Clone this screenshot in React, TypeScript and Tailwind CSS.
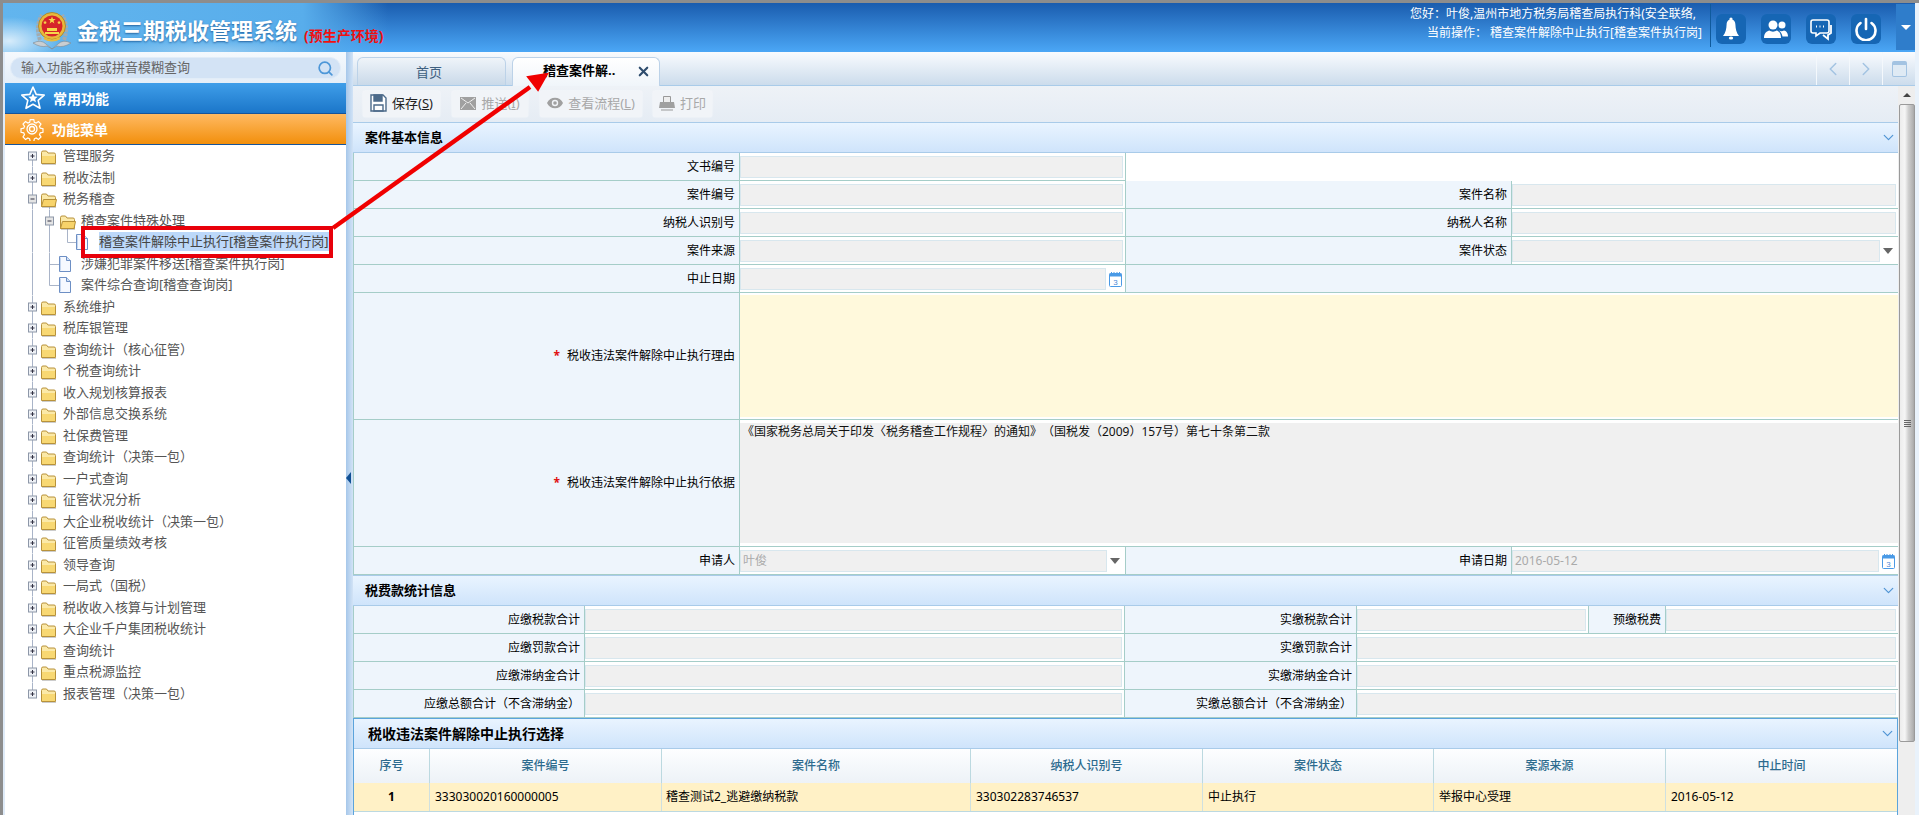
import React from "react";
import { ChevronDown, ChevronLeft, ChevronRight, X, Search } from "lucide-react";

const FOLDERS_A = ["管理服务", "税收法制"];
const FOLDERS_B = [
  "系统维护", "税库银管理", "查询统计（核心征管）", "个税查询统计", "收入规划核算报表", "外部信息交换系统",
  "社保费管理", "查询统计（决策一包）", "一户式查询", "征管状况分析", "大企业税收统计（决策一包）", "征管质量绩效考核",
  "领导查询", "一局式（国税）", "税收收入核算与计划管理", "大企业千户集团税收统计", "查询统计", "重点税源监控", "报表管理（决策一包）",
];

const LINE = "#a9b4c8";
const H = 21.5;

function Box({ x, open }: { x: number; open?: boolean }) {
  return (
    <g>
      <rect x={x - 3.5} y={7} width={8} height={8} fill={open ? "#e4e4e4" : "#eef1f6"} stroke="#8d97a8" />
      <path d={`M${x - 1.5} 11H${x + 2.5}`} stroke="#334" />
      {!open && <path d={`M${x + 0.5} 9V13`} stroke="#334" />}
    </g>
  );
}

function Folder({ x, open }: { x: number; open?: boolean }) {
  return (
    <g transform={`translate(${x} 4)`}>
      <path d="M0.5 3.5 Q0.5 2 2 2H5.5L7 4H13Q14.5 4 14.5 5.5V14.5H0.5Z" fill="#fbe9a8" stroke="#b8923a" />
      {open ? (
        <path d="M0.5 14.5 L2.5 7.5H15.5L14 14.5Z" fill="#f7d36a" stroke="#b8923a" />
      ) : (
        <path d="M1 7H14V14H1Z" fill="#f8d873" />
      )}
      <path d="M1 15.5H15" stroke="#9a9a9a" opacity="0.5" />
    </g>
  );
}

function Doc({ x }: { x: number }) {
  return (
    <g transform={`translate(${x} 3)`}>
      <path d="M0.5 0.5H7.5L11.5 4.5V15.5H0.5Z" fill="#f6f9ff" stroke="#6d8fc4" />
      <path d="M7.5 0.5V4.5H11.5" fill="#cfe0f6" stroke="#6d8fc4" />
      <path d="M1.5 1.5V14.5" stroke="#c5d6ef" />
    </g>
  );
}

type RowKind = {
  w: number;
  text: string;
  first?: boolean;
  last?: boolean;
  selected?: boolean;
  children?: React.ReactNode;
};

function TreeRow({ w, text, first, last, selected, children }: RowKind) {
  return (
    <div className="flex h-[21.5px] items-center">
      <svg width={w} height={H} viewBox={`0 0 ${w} ${H}`} className="shrink-0">
        <path d={first ? `M27.5 11V${H}` : last ? "M27.5 0V11" : `M27.5 0V${H}`} stroke={LINE} fill="none" />
        {children}
      </svg>
      <span className={selected ? "bg-[#bcd8fa] text-[#444] text-[13px] leading-[19px] whitespace-nowrap" : "text-[#555] text-[13px] leading-[19px] whitespace-nowrap"}>
        {text}
      </span>
    </div>
  );
}

function Tree() {
  return (
    <div>
      {FOLDERS_A.map((t, i) => (
        <TreeRow key={t} w={58} text={t} first={i === 0}>
          <Box x={27} />
          <Folder x={36} />
        </TreeRow>
      ))}
      <TreeRow w={58} text="税务稽查">
        <path d={`M44.5 15V${H}`} stroke={LINE} />
        <Box x={27} open />
        <Folder x={36} open />
      </TreeRow>
      <TreeRow w={76} text="稽查案件特殊处理">
        <path d={`M44.5 0V${H}M62.5 15V${H}`} stroke={LINE} />
        <Box x={44} open />
        <Folder x={55} open />
      </TreeRow>
      <TreeRow w={94} text="稽查案件解除中止执行[稽查案件执行岗]" selected>
        <path d={`M44.5 0V${H}M62.5 0V11.5H71`} stroke={LINE} fill="none" />
        <Doc x={71} />
      </TreeRow>
      <TreeRow w={76} text="涉嫌犯罪案件移送[稽查案件执行岗]">
        <path d={`M44.5 0V${H}M44.5 11.5H54`} stroke={LINE} fill="none" />
        <Doc x={54} />
      </TreeRow>
      <TreeRow w={76} text="案件综合查询[稽查查询岗]">
        <path d="M44.5 0V11.5H54" stroke={LINE} fill="none" />
        <Doc x={54} />
      </TreeRow>
      {FOLDERS_B.map((t, i) => (
        <TreeRow key={t + i} w={58} text={t} last={i === FOLDERS_B.length - 1}>
          <Box x={27} />
          <Folder x={36} />
        </TreeRow>
      ))}
    </div>
  );
}

function Emblem() {
  return (
    <svg width="38" height="40" viewBox="0 0 38 40" className="shrink-0">
      <path d="M0 33 Q8 29 13 34 L19 39 L25 34 Q30 29 38 33 Q30 38 24 36 L19 39 L14 36 Q8 38 0 33Z" fill="#c9ced2" stroke="#7f8a90" strokeWidth="0.6" />
      <path d="M7 30 Q2 16 9 5 M31 30 Q36 16 29 5" stroke="#a2abb0" strokeWidth="4" fill="none" strokeDasharray="3 1" />
      <circle cx="19" cy="16" r="13.500" fill="#e8b93c" stroke="#a97f1e" strokeWidth="0.8" />
      <circle cx="19" cy="16" r="10.500" fill="#d6242a" />
      <path d="M19 6.500l1 2.600h2.700l-2.200 1.600.9 2.700-2.400-1.700-2.400 1.700.9-2.700-2.200-1.600H18z" fill="#f7d84a" />
      <path d="M12 10.500l.6 1.300 1.400.1-1.100.9.4 1.300-1.300-.7-1.200.7.4-1.300-1.100-.9 1.400-.1zM26 10.500l.6 1.300 1.400.1-1.100.9.4 1.300-1.300-.7-1.200.7.4-1.300-1.100-.9 1.400-.1z" fill="#f7d84a" />
      <path d="M12 22h14v2H12zM14 18h10v3H14z" fill="#f7d84a" />
      <path d="M11 28 Q19 33 27 28" stroke="#e8b93c" strokeWidth="2.200" fill="none" />
    </svg>
  );
}

function HeadBtn({ children }: { children: React.ReactNode }) {
  return <div className="w-[30px] h-[30px] rounded-[6px] bg-[#1666b4] flex items-center justify-center">{children}</div>;
}

function Header() {
  return (
    <header className="h-[49px] w-[1912px] shrink-0 flex items-stretch bg-[radial-gradient(ellipse_50px_24px_at_6px_38px,rgba(255,255,255,0.75),transparent),radial-gradient(ellipse_120px_12px_at_210px_48px,rgba(255,255,255,0.35),transparent),linear-gradient(to_right,#62b5ee_0px,#58adeb_300px,rgba(80,160,230,0)_385px),linear-gradient(to_bottom,#1a5cae,#4ba7f6)]">
      <div className="ml-[30px] mt-[7px]"><Emblem /></div>
      <div className="ml-[6px] mt-[9px] text-[22px] leading-[36px] font-bold text-white [text-shadow:0_1px_2px_rgba(0,50,110,0.6)] whitespace-nowrap">金税三期税收管理系统</div>
      <div className="ml-[7px] mt-[24px] text-[14px] leading-[18px] font-bold text-[#f01010] whitespace-nowrap">(预生产环境)</div>
      <div className="ml-auto flex flex-col items-end pt-[1px] text-white text-[12px] leading-[19px] whitespace-nowrap">
        <div className="pr-[6px]">您好：叶俊,温州市地方税务局稽查局执行科(安全联络,</div>
        <div>当前操作： 稽查案件解除中止执行[稽查案件执行岗]</div>
      </div>
      <div className="ml-[8px] mt-[1px] h-[43px] w-px bg-[#0f5a9c]" />
      <div className="ml-[5px] mt-[11px] flex gap-[15px]">
        <HeadBtn>
          <svg width="18" height="24" viewBox="0 0 18 24" fill="#fff">
            <circle cx="9" cy="2" r="1.600" />
            <path d="M9 2.500c-3 0-4.300 2.200-4.400 5C4.400 12 3.600 16 1 19h16c-2.600-3-3.400-7-3.600-11.500-.1-2.800-1.400-5-4.400-5z" />
            <ellipse cx="9" cy="21" rx="2.200" ry="1.500" />
          </svg>
        </HeadBtn>
        <HeadBtn>
          <svg width="24" height="20" viewBox="0 0 24 20" fill="#fff">
            <circle cx="9" cy="6" r="4.500" />
            <path d="M0 19c0-5 3-7 5.500-7.500C7 13 11 13 12.500 11.500 15 12 17 14.500 17 19z" />
            <circle cx="18" cy="6" r="3.500" />
            <path d="M15 11.500c1.500 1 3.500 1 5 0 2 .5 4 2 4 6h-5.500c-.5-2.500-1.500-4.500-3.500-6z" />
          </svg>
        </HeadBtn>
        <HeadBtn>
          <svg width="24" height="24" viewBox="0 0 24 24" fill="none" stroke="#fff" strokeWidth="1.600">
            <path d="M4 3h14a2 2 0 0 1 2 2v9a2 2 0 0 1-2 2h-7l-4 3v-3H4a2 2 0 0 1-2-2V5a2 2 0 0 1 2-2z" />
            <path d="M22 8v8l-3 2v4l-5-4" strokeWidth="1.800" />
            <path d="M7 9.500h1M10.500 9.500h1M14 9.500h1" strokeWidth="2" />
          </svg>
        </HeadBtn>
        <HeadBtn>
          <svg width="24" height="24" viewBox="0 0 24 24" fill="none" stroke="#fff" strokeWidth="2.600" strokeLinecap="round">
            <path d="M12 2v10" />
            <path d="M6.500 6a9.500 9.500 0 1 0 11 0" />
          </svg>
        </HeadBtn>
      </div>
      <div className="ml-[15px] mt-[1px] h-[46px] w-[19px] bg-[#2f7dcb] flex items-center justify-center">
        <div className="w-0 h-0 border-x-[5px] border-x-transparent border-t-[5px] border-t-white" />
      </div>
    </header>
  );
}

function Sidebar() {
  return (
    <aside className="w-[343px] shrink-0 pl-[2px] bg-[#dfebf8]">
      <div className="h-full bg-white flex flex-col">
        <div className="h-[31px] shrink-0 bg-[linear-gradient(to_bottom,#f5f9fd,#e4eef8)] pl-[5px] pr-[5px] pt-[5px]">
          <div className="h-[22px] rounded-[11px] bg-[#d3e3f5] border border-[#e2edf8] flex items-center pl-[10px] pr-[6px] text-[13px] text-[#666] whitespace-nowrap">
            <span>输入功能名称或拼音模糊查询</span>
            <Search size={17} strokeWidth={2.400} className="ml-auto text-[#4d97d8]" />
          </div>
        </div>
        <div className="h-[31px] shrink-0 flex items-center bg-[linear-gradient(to_bottom,#3f9ee9,#1b76c9)] border-b border-[#16549a]">
          <svg width="26" height="26" viewBox="0 0 26 26" className="ml-[15px]">
            <path d="M13 2l3.200 7.400 8 .7-6 5.300 1.800 7.900L13 19.200 6 23.300l1.800-7.900-6-5.300 8-.7z" fill="none" stroke="#fff" strokeWidth="1.600" strokeLinejoin="round" />
            <path d="M13 8.500l1.400 3 3.300.3-2.500 2.200.8 3.200-3-1.700-3 1.700.8-3.200-2.500-2.200 3.300-.3z" fill="#fff" />
          </svg>
          <span className="ml-[7px] text-white font-bold text-[14px]">常用功能</span>
        </div>
        <div className="h-[31px] shrink-0 flex items-center bg-[linear-gradient(to_bottom,#ffba62,#f28f0c)] border-b border-[#16549a]">
          <svg width="24" height="24" viewBox="0 0 24 24" className="ml-[15px]" fill="none" stroke="#fff" strokeWidth="1.300">
            <path d="M10 1.500h4l.6 3 2 .9 2.600-1.700 2.800 2.800-1.700 2.600.9 2 3 .6v4l-3 .6-.9 2 1.700 2.600-2.800 2.800-2.600-1.700-2 .9-.6 3h-4l-.6-3-2-.9-2.600 1.700-2.800-2.800 1.700-2.600-.9-2-3-.6v-4l3-.6.9-2-1.700-2.600 2.800-2.800 2.600 1.700 2-.9z" transform="translate(1.200 1.200) scale(0.9)" />
            <circle cx="12" cy="12" r="5" />
            <circle cx="12" cy="12" r="2.500" />
          </svg>
          <span className="ml-[8px] text-white font-bold text-[14px]">功能菜单</span>
        </div>
        <Tree />
      </div>
    </aside>
  );
}

function Splitter() {
  return (
    <div className="w-[7px] shrink-0 bg-[linear-gradient(to_right,#a6c7ea,#d2e3f6)] flex items-center pb-[20px]">
      <div className="mt-[108px] w-0 h-0 border-y-[6px] border-y-transparent border-r-[5px] border-r-[#0f4f94]" />
    </div>
  );
}

function TabBar() {
  return (
    <div className="h-[34px] shrink-0 flex items-end pl-[4px] border-b border-[#a9cbe9] bg-[linear-gradient(to_bottom,#f9fbfe,#ccdcec)]">
      <div className="w-[149px] h-[28px] pr-[5px] pt-[2px] rounded-t-[6px] border border-b-0 border-[#bcd2e8] bg-[linear-gradient(to_bottom,#eff4f9,#c9d9e9)] flex items-center justify-center text-[13px] text-[#3d5f80]">首页</div>
      <div className="relative ml-[6px] w-[148px] h-[29px] -mb-px rounded-t-[6px] border border-b-0 border-[#bcd2e8] bg-[linear-gradient(to_bottom,#ffffff,#f0f5fa)] flex items-center pl-[30px] pb-[2px] text-[13px] font-bold text-black whitespace-nowrap">
        稽查案件解..
        <X size={15} strokeWidth={3.400} className="ml-[21px] text-[#2f4d6e]" />
      </div>
      <div className="ml-auto flex h-[33px] text-[#a3c3e2]">
        <div className="w-[33px] border-l border-[#f4f8fc] flex items-center justify-center"><ChevronLeft size={22} strokeWidth={1.600} /></div>
        <div className="w-[33px] border-l border-[#f4f8fc] flex items-center justify-center"><ChevronRight size={22} strokeWidth={1.600} /></div>
        <div className="w-[33px] border-l border-[#f4f8fc] flex items-center justify-center">
          <div className="w-[15px] h-[16px] rounded-[2px] border border-[#a3c3e2] border-t-[4px] bg-[#dfeaf4]" />
        </div>
      </div>
    </div>
  );
}

function ToolBtn({ className, disabled, children }: { className: string; disabled?: boolean; children: React.ReactNode }) {
  return (
    <div className={`h-[26px] flex items-center justify-center gap-[5px] rounded-[2px] bg-[#f1f4f8] shadow-[0_0_2px_rgba(255,255,255,0.9)] text-[13px] leading-[20px] pb-[2px] whitespace-nowrap ${disabled ? "text-[#a8a8a8]" : "text-[#222]"} ${className}`}>
      {children}
    </div>
  );
}

function Toolbar() {
  return (
    <div className="h-[36px] shrink-0 flex items-center bg-[linear-gradient(to_bottom,#eef2f7,#e5ecf4)] pl-[10px]">
      <ToolBtn className="w-[77px]">
        <svg width="17" height="18" viewBox="0 0 17 18" fill="none" stroke="#4d6b8a" strokeWidth="1.400">
          <path d="M1 1h12l3 3v13H1z" fill="#fff" />
          <path d="M4 1h8v6H4z" fill="#4d6b8a" />
          <path d="M4 11h9v6H4z" />
        </svg>
        <span>保存(<span className="underline">S</span>)</span>
      </ToolBtn>
      <ToolBtn className="ml-[12px] w-[76px]" disabled>
        <svg width="16" height="13" viewBox="0 0 16 13"><rect width="16" height="13" fill="#a0a0a0" /><path d="M1 1l7 5 7-5M1 12l5-6M15 12l-5-6" stroke="#eee" fill="none" /></svg>
        <span>推送(<span className="underline">I</span>)</span>
      </ToolBtn>
      <ToolBtn className="ml-[12px] w-[102px]" disabled>
        <svg width="16" height="12" viewBox="0 0 16 12"><path d="M0 6c3-7 13-7 16 0-3 7-13 7-16 0z" fill="#a0a0a0" /><circle cx="8" cy="6" r="3.200" fill="#f1f4f8" /><circle cx="8" cy="6" r="1.800" fill="#a0a0a0" /></svg>
        <span>查看流程(<span className="underline">L</span>)</span>
      </ToolBtn>
      <ToolBtn className="ml-[11px] w-[59px]" disabled>
        <svg width="16" height="16" viewBox="0 0 16 16"><path d="M4.500 7V1.500h7V7" fill="#eee" stroke="#999" /><path d="M1 7h14l1 6H0z" fill="#a0a0a0" /><path d="M2 15h12" stroke="#999" /></svg>
        <span>打印</span>
      </ToolBtn>
    </div>
  );
}

function SectionHead({ title, className }: { title: string; className?: string }) {
  return (
    <div className={`h-[31px] shrink-0 flex items-center justify-between border-y border-[#a9cbe9] bg-[linear-gradient(to_bottom,#e9f4ff,#cfe4fb)] text-black font-bold ${className ?? ""}`}>
      <span>{title}</span>
      <ChevronDown size={17} strokeWidth={1.700} className="text-[#4f94d4] mr-[1px]" />
    </div>
  );
}

function Row({ children }: { children: React.ReactNode }) {
  return <div className="h-[28px] shrink-0 flex border-b border-[#a5cdc8] bg-[#eef5fc]">{children}</div>;
}

function Label({ className, star, children }: { className: string; star?: boolean; children: React.ReactNode }) {
  return (
    <div className={`h-full flex items-center justify-end pr-[4px] border-r border-[#a5cdc8] text-[12px] text-black whitespace-nowrap bg-[#eef5fc] ${className}`}>
      {star && <span className="text-[#e01010] font-bold mr-[7px]">*</span>}
      {children}
    </div>
  );
}

function Calendar() {
  return (
    <svg width="13" height="15" viewBox="0 0 13 15" className="shrink-0">
      <rect x="0.500" y="1.500" width="12" height="13" rx="1" fill="#fff" stroke="#4a9ae6" />
      <rect x="0.500" y="1.500" width="12" height="3" fill="#4a9ae6" />
      <path d="M2.500 0v2M5 0v2M8 0v2M10.500 0v2" stroke="#4a9ae6" />
      <text x="6.500" y="12.500" textAnchor="middle" fontSize="8" fill="#4a8ad6" fontFamily="Liberation Sans">3</text>
    </svg>
  );
}

function Field({ className, kind, value }: { className: string; kind?: "date" | "select"; value?: string }) {
  return (
    <div className={`h-full flex items-center pt-[1px] pr-[2px] border-r border-[#a5cdc8] bg-white ${kind === "select" ? "bg-[#f0f0f0]" : ""} ${className}`}>
      <div className="flex-1 min-w-0 h-[22px] flex items-center pl-[2px] border border-[#d8e7ee] bg-[#f0f0f0] text-[12px] text-[#aaa]">{value}</div>
      {kind === "date" && <div className="w-[17px] flex justify-center pl-[1px]"><Calendar /></div>}
      {kind === "select" && (
        <div className="w-[16px] flex justify-center">
          <div className="w-0 h-0 border-x-[5px] border-x-transparent border-t-[6px] border-t-[#666]" />
        </div>
      )}
    </div>
  );
}

function BasicInfo() {
  return (
    <>
      <SectionHead title="案件基本信息" className="pl-[12px] text-[13px]" />
      <div className="border-l border-[#a5cdc8]">
        <div className="h-[28px] flex">
          <div className="h-full flex border-b border-[#a5cdc8]">
            <Label className="w-[386px]">文书编号</Label>
            <Field className="w-[386px]" />
          </div>
          <div className="flex-1 bg-white" />
        </div>
        <Row>
          <Label className="w-[386px]">案件编号</Label>
          <Field className="w-[386px]" />
          <Label className="w-[386px]">案件名称</Label>
          <Field className="w-[386px] border-r-0" />
        </Row>
        <Row>
          <Label className="w-[386px]">纳税人识别号</Label>
          <Field className="w-[386px]" />
          <Label className="w-[386px]">纳税人名称</Label>
          <Field className="w-[386px] border-r-0" />
        </Row>
        <Row>
          <Label className="w-[386px]">案件来源</Label>
          <Field className="w-[386px]" />
          <Label className="w-[386px]">案件状态</Label>
          <Field className="w-[386px] border-r-0" kind="select" />
        </Row>
        <Row>
          <Label className="w-[386px]">中止日期</Label>
          <Field className="w-[386px]" kind="date" />
          <div className="flex-1" />
        </Row>
        <div className="h-[127px] flex border-b border-[#a5cdc8]">
          <Label className="w-[386px]" star>税收违法案件解除中止执行理由</Label>
          <div className="flex-1 pt-[2px] pb-[2px] bg-white"><div className="h-full bg-[#fff9dc]" /></div>
        </div>
        <div className="h-[127px] flex border-b border-[#a5cdc8]">
          <Label className="w-[386px]" star>税收违法案件解除中止执行依据</Label>
          <div className="flex-1 pt-[3px] pb-[3px] bg-white">
            <div className="h-full bg-[#f0f0f0] pl-[2px] text-[12px] leading-[18px] text-[#111] whitespace-nowrap">《国家税务总局关于印发〈税务稽查工作规程〉的通知》（国税发（2009）157号）第七十条第二款</div>
          </div>
        </div>
        <Row>
          <Label className="w-[386px]">申请人</Label>
          <Field className="w-[386px]" kind="select" value="叶俊" />
          <Label className="w-[386px]">申请日期</Label>
          <Field className="w-[386px] border-r-0" kind="date" value="2016-05-12" />
        </Row>
      </div>
    </>
  );
}

const FEE_ROWS = [
  ["应缴罚款合计", "实缴罚款合计"],
  ["应缴滞纳金合计", "实缴滞纳金合计"],
  ["应缴总额合计（不含滞纳金）", "实缴总额合计（不含滞纳金）"],
];

function FeeInfo() {
  return (
    <>
      <SectionHead title="税费款统计信息" className="pl-[12px] text-[13px]" />
      <div className="border-l border-[#a5cdc8]">
        <Row>
          <Label className="w-[231px]">应缴税款合计</Label>
          <Field className="w-[540px]" />
          <Label className="w-[232px]">实缴税款合计</Label>
          <Field className="w-[232px]" />
          <Label className="w-[77px]">预缴税费</Label>
          <Field className="w-[232px] border-r-0" />
        </Row>
        {FEE_ROWS.map(([a, b]) => (
          <Row key={a}>
            <Label className="w-[231px]">{a}</Label>
            <Field className="w-[540px]" />
            <Label className="w-[232px]">{b}</Label>
            <Field className="w-[541px] border-r-0" />
          </Row>
        ))}
      </div>
    </>
  );
}

const COLS = [
  { w: "w-[76px]", head: "序号", cell: "1", cls: "justify-center font-bold" },
  { w: "w-[232px]", head: "案件编号", cell: "333030020160000005", cls: "pl-[5px]" },
  { w: "w-[309px]", head: "案件名称", cell: "稽查测试2_逃避缴纳税款", cls: "pl-[4px]" },
  { w: "w-[232px]", head: "纳税人识别号", cell: "330302283746537", cls: "pl-[5px]" },
  { w: "w-[231px]", head: "案件状态", cell: "中止执行", cls: "pl-[5px]" },
  { w: "w-[232px]", head: "案源来源", cell: "举报中心受理", cls: "pl-[5px]" },
  { w: "flex-1", head: "中止时间", cell: "2016-05-12", cls: "pl-[5px]" },
];

function SelectTable() {
  return (
    <div className="border-x border-t border-[#5ba4dc] flex-1 bg-white">
      <SectionHead title="税收违法案件解除中止执行选择" className="pl-[14px] text-[14px] border-t-0 !h-[30px]" />
      <div className="h-[34px] flex bg-[linear-gradient(to_bottom,#fdfeff,#edf2f7)]">
        {COLS.map((c) => (
          <div key={c.head} className={`${c.w} h-full flex items-center justify-center border-r border-[#bcd9e0] text-[12px] font-medium text-[#2d6b8e] last:border-r-0`}>{c.head}</div>
        ))}
      </div>
      <div className="h-[29px] flex bg-[#fff1c6] border-b border-[#bcd9e0]">
        {COLS.map((c) => (
          <div key={c.head} className={`${c.w} h-full flex items-center border-r border-[#cfe0e0] text-[12px] text-black whitespace-nowrap last:border-r-0 ${c.cls}`}>{c.cell}</div>
        ))}
      </div>
    </div>
  );
}

function Scrollbar() {
  return (
    <div className="w-[17px] h-full shrink-0 flex flex-col bg-[#eeeeee] pl-[1px]">
      <div className="h-[18px] shrink-0 flex items-center justify-center">
        <div className="w-0 h-0 border-x-[4px] border-x-transparent border-b-[4px] border-b-[#444]" />
      </div>
      <div className="h-[638px] shrink-0 rounded-[2px] border border-[#9a9a9a] bg-[linear-gradient(to_right,#ececec,#f5f5f5_35%,#cfcfcf_60%,#b4b4b4_90%,#a8a8a8)] flex flex-col items-center justify-center gap-px">
        <div className="w-[7px] h-px bg-[#666]" />
        <div className="w-[7px] h-px bg-[#666]" />
        <div className="w-[7px] h-px bg-[#666]" />
        <div className="w-[7px] h-px bg-[#666]" />
      </div>
    </div>
  );
}

function Annotation() {
  return (
    <>
      <div className="absolute left-[81px] top-[226px] w-[252px] h-[32px] border-[4px] border-[#e8000a] pointer-events-none" />
      <svg width="1919" height="815" className="absolute left-0 top-0 pointer-events-none">
        <path d="M333 228L530 87" stroke="#f00000" strokeWidth="4.500" />
        <path d="M547 74L528 77L538 90Z" fill="#f00000" stroke="#f00000" strokeWidth="2" />
      </svg>
    </>
  );
}

export default function App() {
  return (
    <div className="relative w-[1919px] h-[815px] overflow-hidden [text-spacing-trim:space-all] font-['Noto_Sans','Noto_Sans_CJK_SC',sans-serif] bg-[#e9f2fb]">
      <div className="w-full h-full flex flex-col border-t-[3px] border-l-[3px] border-[#8d8d8d]">
        <Header />
        <div className="flex-1 min-h-0 flex">
          <Sidebar />
          <Splitter />
          <main className="w-[1562px] shrink-0 flex flex-col">
            <TabBar />
            <div className="flex-1 min-h-0 flex">
              <div className="w-[1545px] shrink-0 flex flex-col bg-white">
                <Toolbar />
                <BasicInfo />
                <FeeInfo />
                <SelectTable />
              </div>
              <Scrollbar />
            </div>
          </main>
        </div>
      </div>
      <Annotation />
    </div>
  );
}
